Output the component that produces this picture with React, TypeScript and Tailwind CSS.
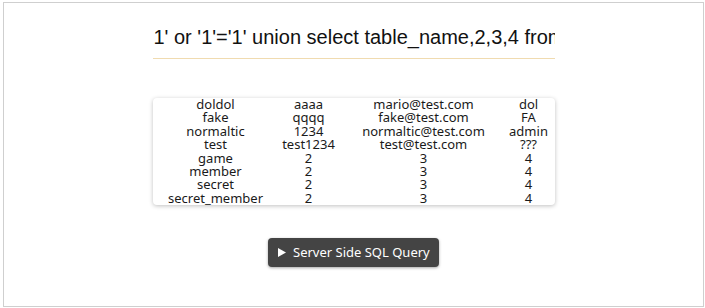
import React from "react";

const rows = [
  ["doldol", "aaaa", "mario@test.com", "dol"],
  ["fake", "qqqq", "fake@test.com", "FA"],
  ["normaltic", "1234", "normaltic@test.com", "admin"],
  ["test", "test1234", "test@test.com", "???"],
  ["game", "2", "3", "4"],
  ["member", "2", "3", "4"],
  ["secret", "2", "3", "4"],
  ["secret_member", "2", "3", "4"],
];

export default function App() {
  return (
    <div className="w-[705px] h-[308px] bg-white pt-[2px] pl-[3px]">
      <div className="w-[701px] h-[305px] border border-[#cfcfcf] bg-white flex flex-col items-center">
        <div className="mt-[22px] w-[402px] border-b border-[#f0dbb0] h-[34px] overflow-hidden whitespace-nowrap">
          <div
            className="text-[20px] leading-[24px] text-[#111] pl-px"
            style={{ fontFamily: '"Liberation Sans", Arial, sans-serif' }}
          >
            1' or '1'='1' union select table_name,2,3,4 from information_schema.tables
          </div>
        </div>
        <div
          className="mt-[39px] w-[402px] bg-white rounded-[4px] shadow-[0_1px_4px_rgba(0,0,0,0.25)] grid grid-cols-[126px_60px_170px_40px] text-[13px] leading-[13.4px] text-[#1a1a1a]"
          style={{ fontFamily: '"Noto Sans", "Noto Sans CJK KR", sans-serif' }}
        >
          {rows.map((r, i) => (
            <React.Fragment key={i}>
              {r.map((c, j) => (
                <div key={j} className="text-center whitespace-nowrap">
                  {c}
                </div>
              ))}
            </React.Fragment>
          ))}
        </div>
        <button
          className="mt-[33px] h-[29px] w-[171px] rounded-[4px] bg-[#444444] shadow-[0_1px_3px_rgba(0,0,0,0.35)] flex items-center pl-[10px] text-white text-[13px]"
          style={{ fontFamily: '"Noto Sans", "Noto Sans CJK KR", sans-serif' }}
        >
          <svg width="8" height="9" viewBox="0 0 8 9" className="mr-[7px]">
            <path d="M0 0 L8 4.5 L0 9 Z" fill="white" />
          </svg>
          Server Side SQL Query
        </button>
      </div>
    </div>
  );
}
